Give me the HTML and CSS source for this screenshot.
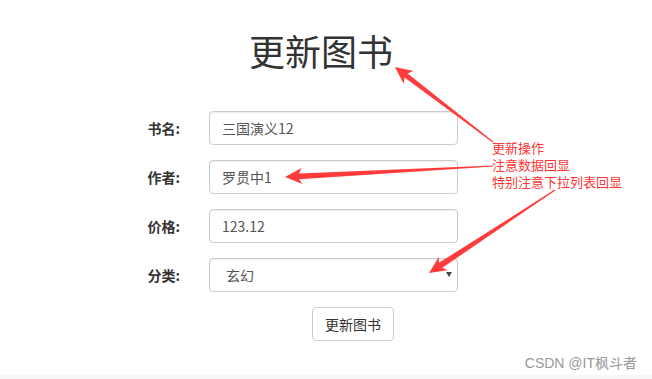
FILE: index.html
```html
<!DOCTYPE html>
<html lang="zh-CN">
<head>
  <meta charset="UTF-8">
  <meta name="viewport" content="width=device-width, initial-scale=1">
  <title>更新图书</title>
  <link rel="stylesheet" href="styles.css">
</head>
<body>
  <div class="page">
    <h1 class="title">更新图书</h1>

    <form class="book-form">
      <div class="form-row">
        <label for="name">书名:</label>
        <input class="field" id="name" type="text" value="三国演义12">
      </div>
      <div class="form-row">
        <label for="author">作者:</label>
        <input class="field" id="author" type="text" value="罗贯中1">
      </div>
      <div class="form-row">
        <label for="price">价格:</label>
        <input class="field" id="price" type="text" value="123.12">
      </div>
      <div class="form-row">
        <label for="type">分类:</label>
        <div class="select-wrap">
          <select class="field" id="type">
            <option>玄幻</option>
            <option>历史</option>
          </select>
        </div>
      </div>
      <div class="form-actions">
        <button type="button" class="btn">更新图书</button>
      </div>
    </form>

    <!-- annotations -->
    <div class="note">
      <div>更新操作</div>
      <div>注意数据回显</div>
      <div>特别注意下拉列表回显</div>
    </div>
    <svg class="arrows" width="652" height="379" viewBox="0 0 652 379">
      <polygon points="395,67 413.4,71 407.6,73.5 493.3,141.6 492.7,142.4 404.6,77.5 403.6,83.7"/>
      <polygon points="285,177 301.6,168.1 299,173.5 493,165.5 493,166.5 299.2,179.2 302.4,184.1"/>
      <polygon points="429,273 438.8,257 439.05,262.8 554.7,189.6 555.3,190.4 442.35,267.8 447.6,270.3"/>
    </svg>

    <div class="watermark">CSDN @IT枫斗者</div>
    <div class="bottom-strip"></div>
  </div>
</body>
</html>
```

FILE: styles.css
```css
:root {
  --text-color: #333;
  --field-text: #555;
  --border-color: #ccc;
  --note-red: #ff3535;
  --font-main: "Noto Sans CJK SC", "Noto Sans", "Liberation Sans", sans-serif;
}

body {
  margin: 0;
  font-family: var(--font-main);
  font-size: 14px;
  color: var(--text-color);
  background: #fff;
}

.page {
  position: relative;
  min-height: 379px;
  overflow: hidden;
}

.title {
  margin: 30px 0 0;
  padding-right: 10px;
  text-align: center;
  font-size: 36px;
  font-weight: 400;
  line-height: 40px;
}

.book-form {
  margin-top: 41px;
}

.form-row {
  display: flex;
  align-items: center;
  gap: 29px;
  margin-bottom: 15px;
}

.form-row label {
  flex: none;
  width: 180px;
  text-align: right;
  font-weight: bold;
  font-size: 14px;
}

.field {
  box-sizing: border-box;
  width: 249px;
  height: 34px;
  padding: 6px 12px;
  font-family: var(--font-main);
  font-size: 14px;
  color: var(--field-text);
  background: #fff;
  border: 1px solid var(--border-color);
  border-radius: 4px;
  box-shadow: inset 0 1px 1px rgba(0, 0, 0, 0.075);
  outline: none;
}

/* select avec petite flèche maison */
.select-wrap {
  position: relative;
  width: 249px;
}

.select-wrap select {
  appearance: none;
  -webkit-appearance: none;
  padding-left: 16px;
}

.select-wrap::after {
  content: "";
  position: absolute;
  right: 6px;
  top: 14px;
  border-left: 3px solid transparent;
  border-right: 3px solid transparent;
  border-top: 5px solid #444;
  pointer-events: none;
}

.form-actions {
  padding-left: 312px;
}

.btn {
  box-sizing: border-box;
  height: 34px;
  padding: 6px 12px;
  font-family: var(--font-main);
  font-size: 14px;
  color: var(--text-color);
  background: #fff;
  border: 1px solid var(--border-color);
  border-radius: 4px;
}

.note {
  position: absolute;
  left: 492px;
  top: 139px;
  font-size: 13px;
  color: var(--note-red);
}

.note div {
  height: 17px;
  line-height: 17px;
}

.arrows {
  position: absolute;
  left: 0;
  top: 0;
  fill: #ff3b3b;
  pointer-events: none;
}

.watermark {
  position: absolute;
  right: 15px;
  top: 352px;
  font-size: 14px;
  color: #999;
  font-family: "Liberation Sans", "Noto Sans CJK SC", sans-serif;
}

.bottom-strip {
  position: absolute;
  left: 0;
  right: 0;
  bottom: 0;
  height: 4px;
  background: #f7f7f7;
}
```
